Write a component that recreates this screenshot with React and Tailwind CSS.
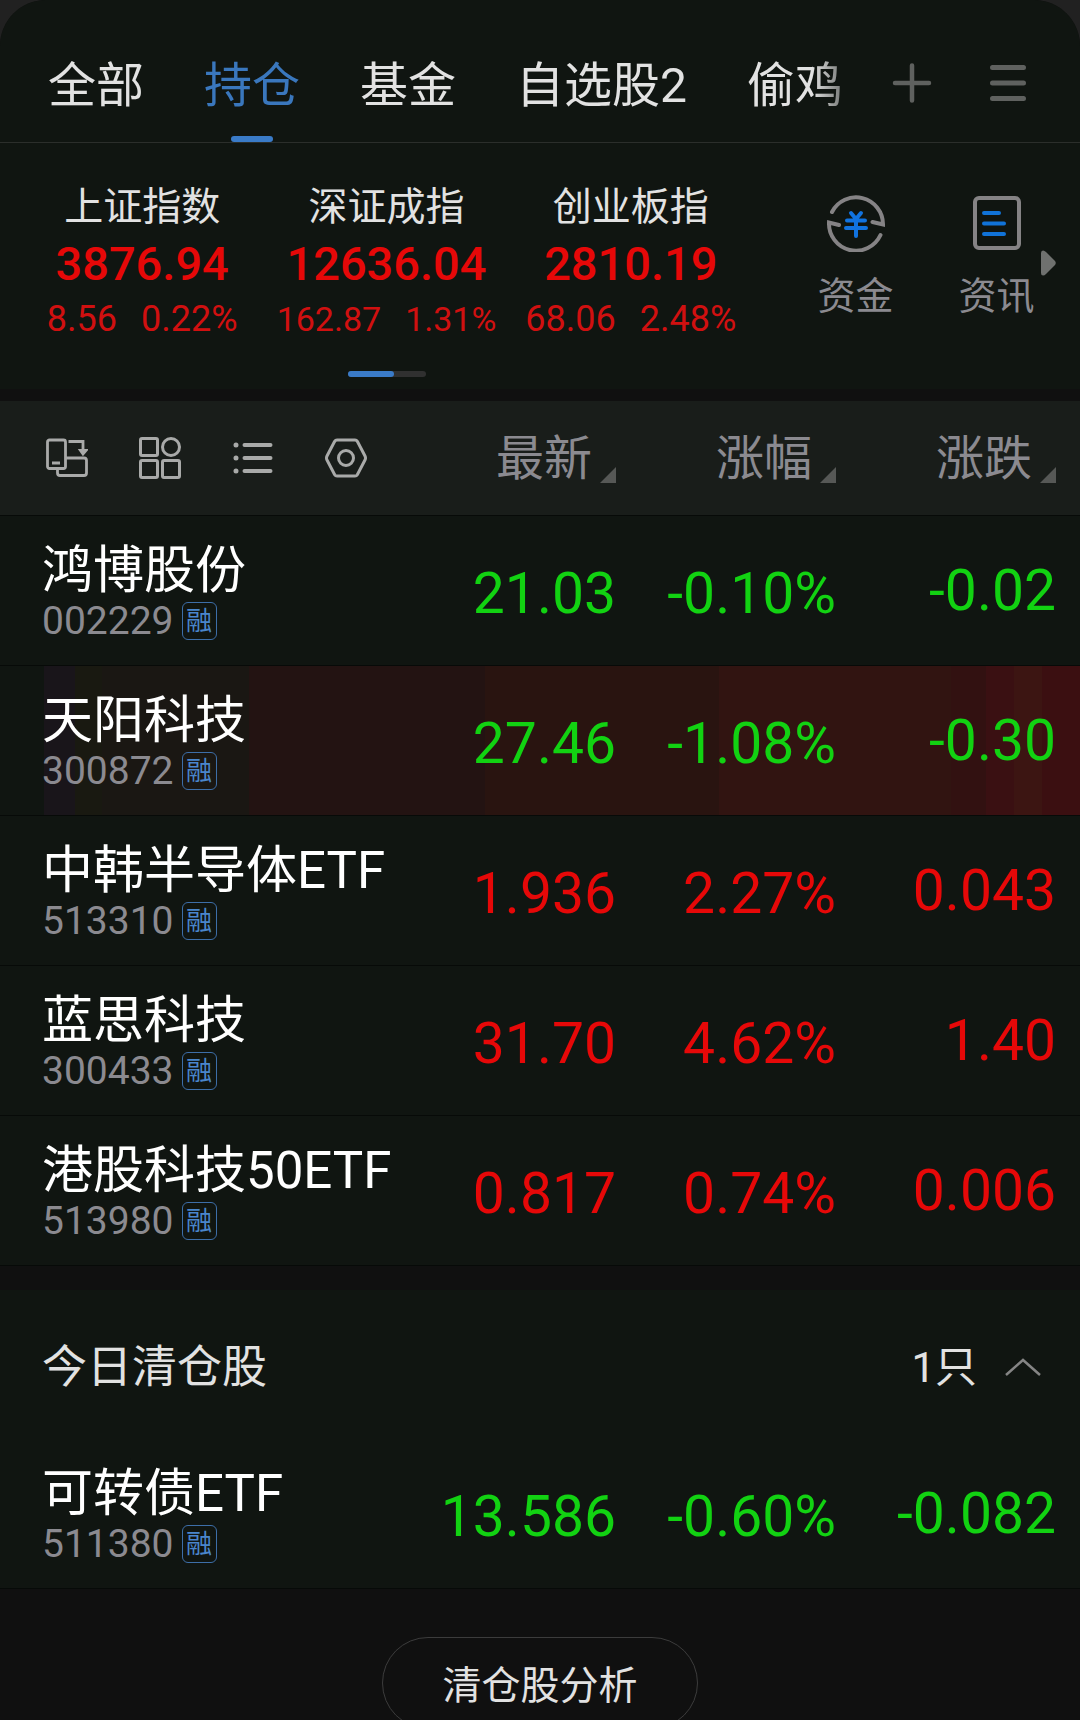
import React from "react";
import clsx from "clsx";

const TABS = ["全部", "持仓", "基金", "自选股2", "偷鸡"];

const INDICES = [
  { name: "上证指数", value: "3876.94", diff: "8.56", pct: "0.22%" },
  { name: "深证成指", value: "12636.04", diff: "162.87", pct: "1.31%" },
  { name: "创业板指", value: "2810.19", diff: "68.06", pct: "2.48%" },
];

const HOLDINGS = [
  { name: "鸿博股份", code: "002229", price: "21.03", pct: "-0.10%", diff: "-0.02" },
  { name: "天阳科技", code: "300872", price: "27.46", pct: "-1.08%", diff: "-0.30", flash: true },
  { name: "中韩半导体ETF", code: "513310", price: "1.936", pct: "2.27%", diff: "0.043" },
  { name: "蓝思科技", code: "300433", price: "31.70", pct: "4.62%", diff: "1.40" },
  { name: "港股科技50ETF", code: "513980", price: "0.817", pct: "0.74%", diff: "0.006" },
];

const CLEARED = [
  { name: "可转债ETF", code: "511380", price: "13.586", pct: "-0.60%", diff: "-0.082" },
];

const PlusIcon = () => (
  <svg width="40" height="40" viewBox="0 0 40 40" fill="none" stroke="#5f615f" strokeWidth="4.5" strokeLinecap="round">
    <path d="M20 2.5v35M3 20h34" />
  </svg>
);

const MenuIcon = () => (
  <svg width="40" height="40" viewBox="0 0 40 40" fill="none" stroke="#5f615f" strokeWidth="5" strokeLinecap="round">
    <path d="M4.5 4.5h31M4.5 20h31M4.5 35.5h31" />
  </svg>
);

const FundIcon = () => (
  <svg width="60" height="58" viewBox="0 0 60 58" fill="none" strokeWidth="4" strokeLinecap="round">
    <g stroke="#858385">
      <path d="M6 18A27 27 0 0 1 57 30.5L46.5 28" />
      <path d="M54.5 41A27 27 0 0 1 3 28.5L13 31" />
    </g>
    <path d="M25 19l5 6 5-6M21 26.5h18M20 34h20M30 26v16" stroke="#1173e0" />
  </svg>
);

const NewsIcon = () => (
  <svg width="60" height="58" viewBox="0 0 60 58" fill="none" strokeWidth="4">
    <rect x="8" y="4" width="44" height="50" rx="4" stroke="#858385" />
    <path d="M17 19h15M17 29.5h20M17 40h20" stroke="#1173d8" strokeLinecap="round" />
  </svg>
);

const SwitchViewIcon = () => (
  <svg width="42" height="42" viewBox="0 0 42 42" fill="none" stroke="#a9aaa9" strokeWidth="2.8">
    <rect x="1.5" y="3" width="18" height="28.5" rx="2" />
    <path d="M6 26h8M22.5 4.5H37v10M20 21h18a2.5 2.5 0 0 1 2.5 2.5V36a2.5 2.5 0 0 1-2.5 2.5H14a2.5 2.5 0 0 1-2.5-2.5v-4" />
    <path d="M34.5 13.5h5.5L37 17z" fill="#a9aaa9" />
  </svg>
);

const GridIcon = () => (
  <svg width="42" height="42" viewBox="0 0 42 42" fill="none" stroke="#a9aaa9" strokeWidth="3">
    <rect x="1.5" y="1.5" width="17" height="17" rx="1.5" />
    <circle cx="32" cy="10" r="8.5" />
    <rect x="1.5" y="23.5" width="17" height="17" rx="1.5" />
    <rect x="23.5" y="23.5" width="17" height="17" rx="1.5" />
  </svg>
);

const ListIcon = () => (
  <svg width="42" height="42" viewBox="0 0 42 42" fill="none" stroke="#a9aaa9" strokeWidth="4" strokeLinecap="round">
    <path d="M12.5 8h26M12.5 21h26M12.5 34h26" />
    <path d="M4 8h0M4 21h0M4 34h0" strokeWidth="5" />
  </svg>
);

const SettingIcon = () => (
  <svg width="42" height="42" viewBox="0 0 42 42" fill="none" stroke="#a9aaa9" strokeWidth="3" strokeLinejoin="round">
    <path d="M12 3h18q1.5 0 2.300 1.300L40 19q1 2 0 4l-7.700 14.700Q31.500 39 30 39H12q-1.500 0-2.300-1.300L2 23q-1-2 0-4L9.700 4.300Q10.500 3 12 3z" />
    <circle cx="21" cy="21" r="7.5" />
  </svg>
);

const TOOLS = [
  { label: "切换视图", icon: SwitchViewIcon },
  { label: "宫格", icon: GridIcon },
  { label: "列表", icon: ListIcon },
  { label: "设置", icon: SettingIcon },
];

const SHORTCUTS = [
  { label: "资金", icon: FundIcon },
  { label: "资讯", icon: NewsIcon },
];

const Columns = () => (
  <colgroup>
    <col />
    <col className="w-[220px]" />
    <col className="w-[220px]" />
    <col className="w-[244px]" />
  </colgroup>
);

const StockRow = ({ stock }) => {
  const color = stock.pct.startsWith("-") ? "text-[#12d212]" : "text-[#e60808]";
  return (
    <tr
      className={clsx(
        stock.flash &&
          "bg-[linear-gradient(90deg,#101511_0_4.1%,#19151a_4.1%_6.9%,#191911_6.9%_9.4%,#1a1713_9.4%_23.1%,#231312_23.1%_44.9%,#291410_44.9%_66.6%,#311411_66.6%_88.1%,#321111_88.1%_91.3%,#3a1012_91.3%_93.9%,#3c1512_93.9%_96.5%,#3b0f11_96.5%)]"
      )}
    >
      <td className="h-[150px] border-b border-[#070a08] pl-[42px] whitespace-nowrap">
        <div className="pt-1 text-[51px] leading-[56px] text-white">{stock.name}</div>
        <div className="flex items-center gap-2 text-[39px] leading-[44px] text-[#8b8a90]">
          {stock.code}
          <span className="flex h-[38px] w-[35px] items-center justify-center rounded-md border border-[#3d6ea8] text-[26px] leading-[36px] text-[#4a86cc]">
            融
          </span>
        </div>
      </td>
      <td className={clsx("border-b border-[#070a08] pt-1.5 text-right text-[57px] leading-[64px]", color)}>{stock.price}</td>
      <td className={clsx("border-b border-[#070a08] pt-1.5 text-right text-[57px] leading-[64px]", color)}>{stock.pct}</td>
      <td className={clsx("border-b border-[#070a08] pr-6 text-right text-[57px] leading-[64px]", color)}>{stock.diff}</td>
    </tr>
  );
};

const SortHeader = ({ label, last }) => (
  <th className={clsx("border-b border-[#070a08] pt-0.5 font-normal", last && "pr-6")}>
    <button type="button" className="ml-auto flex items-end gap-2 text-[48px] leading-[60px] text-[#8b8a90]">
      {label}
      <svg width="16" height="16" viewBox="0 0 16 16" className="mb-1.5" fill="#565856">
        <path d="M16 0v16H0z" />
      </svg>
    </button>
  </th>
);

const App = () => {
  return (
    <div className="h-screen overflow-hidden bg-[#212121] font-[Roboto,'Noto_Sans_CJK_SC',sans-serif] text-[#e2e2e2]">
      <div className="min-h-full rounded-t-[46px] bg-[#101010]">
        {/* Group tabs */}
        <header className="flex h-[143px] rounded-t-[46px] border-b border-[#2b2e2b] bg-[#101511] pl-12">
          <nav className="flex min-w-0 flex-1 gap-[60px] overflow-hidden mask-[linear-gradient(90deg,#000_calc(100%-36px),rgba(0,0,0,0.4))]">
            {TABS.map((tab, i) => (
              <button
                key={tab}
                type="button"
                className={clsx(
                  "relative shrink-0 pt-[30px] text-[48px] leading-[60px] whitespace-nowrap",
                  i === 1 && "text-[#3a77bd]"
                )}
              >
                {tab}
                {i === 1 && <span className="absolute bottom-0 left-1/2 h-1.5 w-[42px] -translate-x-1/2 rounded-full bg-[#3a7bc8]" />}
              </button>
            ))}
          </nav>
          <div className="flex items-center gap-14 pt-6 pr-[52px] pl-11">
            <button type="button" aria-label="添加"><PlusIcon /></button>
            <button type="button" aria-label="菜单"><MenuIcon /></button>
          </div>
        </header>

        {/* Market indices */}
        <section className="relative flex gap-8 bg-[#101511] pr-[13px] pb-3 pl-5">
          <div className="flex-1 pt-10">
            <div className="grid grid-cols-3">
              {INDICES.map((item) => (
                <div key={item.name} className="text-center whitespace-nowrap">
                  <div className="text-[39px] leading-[48px]">{item.name}</div>
                  <div className="text-[47px] leading-[66px] font-medium text-[#e60808]">{item.value}</div>
                  <div
                    className={clsx(
                      "flex justify-center gap-6 leading-[44px] text-[#d01010]",
                      item.diff.length > 5 ? "text-[34px]" : "text-[36px]"
                    )}
                  >
                    <span>{item.diff}</span>
                    <span>{item.pct}</span>
                  </div>
                </div>
              ))}
            </div>
            <div className="mx-auto mt-[30px] h-1.5 w-[78px] rounded-full bg-[#303030]">
              <div className="h-full w-3/5 rounded-full bg-[#3a7bc8]" />
            </div>
          </div>
          <div className="flex items-start pt-[51px]">
            {SHORTCUTS.map((s) => (
              <button key={s.label} type="button" className="flex w-[141px] flex-col items-center gap-5 text-[38px] leading-[48px] text-[#8b8a90]">
                <s.icon />
                {s.label}
              </button>
            ))}
          </div>
          <svg width="16" height="26" viewBox="0 0 16 26" className="absolute top-[107px] right-6" fill="#6f716f">
            <path d="M1 3Q1 .5 3 .5 4.5 .5 6 2l9 9q1.5 2 0 4l-9 9q-1.5 1.5-3 1.5-2 0-2-2.5z" />
          </svg>
        </section>

        {/* Holdings */}
        <table className="mt-3 w-full table-fixed border-separate border-spacing-0 bg-[#101511]">
          <Columns />
          <thead>
            <tr className="bg-[#191d1a]">
              <th className="h-[115px] border-b border-[#070a08] pl-[46px]">
                <div className="flex gap-[51px]">
                  {TOOLS.map((t) => (
                    <button key={t.label} type="button" aria-label={t.label}>
                      <t.icon />
                    </button>
                  ))}
                </div>
              </th>
              <SortHeader label="最新" />
              <SortHeader label="涨幅" />
              <SortHeader label="涨跌" last />
            </tr>
          </thead>
          <tbody>
            {HOLDINGS.map((stock) => (
              <StockRow key={stock.code} stock={stock} />
            ))}
          </tbody>
        </table>

        {/* Positions closed today */}
        <section className="mt-6 bg-[#101511]">
          <div className="flex h-[149px] items-center justify-between pt-1.5 pr-[39px] pl-[42px]">
            <h2 className="text-[45px] leading-[60px]">今日清仓股</h2>
            <button type="button" className="flex items-center gap-7 text-[42px] leading-[60px]">
              1只
              <svg width="36" height="20" viewBox="0 0 36 20" fill="none" stroke="#858585" strokeWidth="2.5">
                <path d="M1 17L18 2l17 15" />
              </svg>
            </button>
          </div>
          <table className="w-full table-fixed border-separate border-spacing-0">
            <Columns />
            <tbody>
              {CLEARED.map((stock) => (
                <StockRow key={stock.code} stock={stock} />
              ))}
            </tbody>
          </table>
        </section>

        <div className="flex justify-center pt-12">
          <button type="button" className="rounded-full border border-[#3c3c3c] px-[59px] pt-[18px] pb-3 text-[39px] leading-[60px]">
            清仓股分析
          </button>
        </div>
      </div>
    </div>
  );
};

export default App;
